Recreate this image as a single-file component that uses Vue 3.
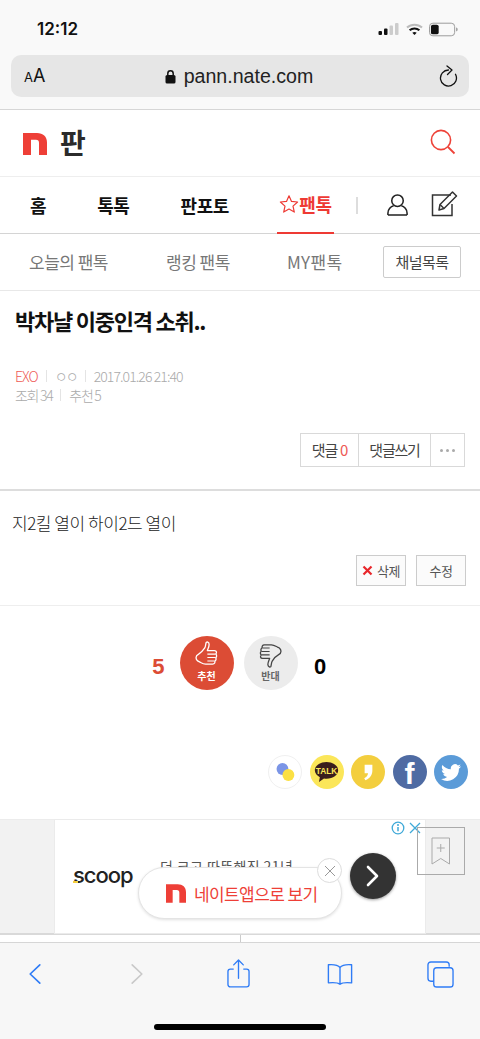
<script setup>
const mainTabs = ["홈", "톡톡", "판포토"];
const subTabs = ["오늘의 팬톡", "랭킹 팬톡", "MY팬톡"];
</script>

<template>
  <div class="page">
    <header class="safari-top">
      <div class="status">
        <span class="time">12:12</span>
        <div class="status-icons">
          <svg width="22" height="14" viewBox="0 0 22 14">
            <rect x="0.5" y="9" width="3.5" height="4" rx="1" fill="#111" />
            <rect x="6" y="6.5" width="3.5" height="6.5" rx="1" fill="#111" />
            <rect x="11.5" y="3.5" width="3.5" height="9.5" rx="1" fill="#ccc" />
            <rect x="17" y="1" width="3.5" height="12" rx="1" fill="#ccc" />
          </svg>
          <svg width="17" height="13" viewBox="0 0 17 13">
            <path d="M1 4.5C5.2.7 11.8.7 16 4.5" fill="none" stroke="#bbb" stroke-width="2" />
            <path d="M3.6 7.2c2.8-2.4 7-2.4 9.8 0" fill="none" stroke="#111" stroke-width="2" />
            <path d="M6.3 9.7c1.3-1 3.1-1 4.4 0L8.5 12z" fill="#111" />
          </svg>
          <svg width="30" height="15" viewBox="0 0 31 15">
            <rect x="0.5" y="1" width="26" height="13" rx="3.5" fill="none" stroke="#999" />
            <rect x="2" y="2.5" width="8" height="10" rx="2" fill="#111" />
            <path d="M28 5.5c1.2.4 1.6 1.1 1.6 2s-.4 1.6-1.6 2z" fill="#999" />
          </svg>
        </div>
      </div>
      <div class="url-bar">
        <span class="aa"><small>A</small>A</span>
        <div class="url">
          <svg width="11" height="15" viewBox="0 0 11 15">
            <path d="M2.8 7V4.4a2.7 2.7 0 0 1 5.4 0V7" fill="none" stroke="#111" stroke-width="1.5" />
            <rect x="0.5" y="6" width="10" height="8.5" rx="1.6" fill="#111" />
          </svg>
          <span>pann.nate.com</span>
        </div>
        <svg class="reload" width="20" height="22" viewBox="0 0 20 22">
          <path d="M9.5 5A8 8 0 1 0 16.5 9.2" fill="none" stroke="#111" stroke-width="1.3" stroke-linecap="round" />
          <path d="M8 1l5 4-4.5 4.5" fill="none" stroke="#111" stroke-width="1.3" stroke-linecap="round" stroke-linejoin="round" />
        </svg>
      </div>
    </header>

    <div class="logo-row">
      <div class="logo">
        <svg class="n-logo" width="24" height="22" viewBox="0 0 24 22">
          <path d="M0 0h14c6 0 10 3.5 10 9.5V22h-8V10c0-2-1-3.2-3-3.2H8V22H0z" fill="#ee3f37" />
        </svg>
        <span>판</span>
      </div>
      <svg class="search" width="26" height="26" viewBox="0 0 26 26">
        <circle cx="11" cy="11" r="9.6" fill="none" stroke="#ee4238" stroke-width="1.6" />
        <path d="M18 18l6.5 6.5" stroke="#ee4238" stroke-width="1.8" />
      </svg>
    </div>

    <nav class="main-nav">
      <a v-for="t in mainTabs" :key="t" class="main-tab">{{ t }}</a>
      <a class="main-tab active">
        <svg width="20" height="20" viewBox="0 0 20 20">
          <path d="M10 1.8l2.5 5.6 6.1.6-4.6 4.1 1.3 6-5.3-3.1-5.3 3.1 1.3-6L1.4 8l6.1-.6z" fill="none" stroke="#ee3a34" stroke-width="1.2" stroke-linejoin="round" />
        </svg>팬톡
      </a>
      <i class="nav-sep"></i>
      <svg class="user-ic" width="23" height="23" viewBox="0 0 24 24">
        <circle cx="12" cy="8" r="6" fill="none" stroke="#222" stroke-width="1.6" />
        <path d="M2 23v-2c0-4 3-7 6-7.6M22 23v-2c0-4-3-7-6-7.6M2 23h20" fill="none" stroke="#222" stroke-width="1.6" />
      </svg>
      <svg class="edit-ic" width="27" height="27" viewBox="0 0 27 27">
        <path d="M20 5H1.5v20.5H21V14" fill="none" stroke="#333" stroke-width="1.5" />
        <path d="M8 20l1-5.500L21.500 2l4 4L13 18.500z" fill="none" stroke="#333" stroke-width="1.5" stroke-linejoin="round" />
        <path d="M9 14.500l4 4" stroke="#333" stroke-width="1.5" />
      </svg>
    </nav>

    <nav class="sub-nav">
      <a v-for="t in subTabs" :key="t" class="sub-tab">{{ t }}</a>
      <a class="channel">채널목록</a>
    </nav>

    <section class="post-head">
      <h1>박차냘 이중인격 소취..</h1>
      <div class="meta">
        <span class="red">EXO</span><i></i><span class="nick">ㅇㅇ</span><i></i><span>2017.01.26 21:40</span>
      </div>
      <div class="meta second">
        <span>조회 34</span><i></i><span>추천 5</span>
      </div>
      <div class="reply-btns">
        <a class="w1">댓글 <b>0</b></a>
        <a class="w2">댓글쓰기</a>
        <a class="w3"><em></em><em></em><em></em></a>
      </div>
    </section>

    <section class="post-body">
      <p>지2킬 열이 하이2드 열이</p>
      <div class="edit-btns">
        <a>
          <svg width="11" height="11" viewBox="0 0 11 11">
            <path d="M1.5 1.5l8 8M9.5 1.5l-8 8" stroke="#e8262a" stroke-width="2.2" />
          </svg>
          삭제
        </a>
        <a>수정</a>
      </div>
    </section>

    <section class="vote">
      <b class="count up">5</b>
      <div class="circle red-c">
        <svg width="25" height="27" viewBox="0 0 28 31">
          <path d="M5 15c2-1 5-4 7-7 1-2 1-4 1.500-6 .5-1.500 3.500-1 3.500 2 0 3-1.500 5-2 7h8c3 0 3 3 1.500 4 1.500 1 1.500 3.500 0 4.200 1 1.300.5 3.300-1 3.800.5 1.500 0 3.500-2.500 3.500H13c-3 0-5-1.500-7-2.500-3-1-4-3-4-5s1-3 3-4z" fill="none" stroke="#fff" stroke-width="1.5" stroke-linejoin="round" />
          <path d="M15 15h9M15 19h9M15 23h8" stroke="#fff" stroke-width="1.3" />
        </svg>
        <span>추천</span>
      </div>
      <div class="circle grey-c">
        <svg width="25" height="27" viewBox="0 0 28 31">
          <path d="M23 16c-2 1-5 4-7 7-1 2-1 4-1.500 6-.5 1.500-3.500 1-3.500-2 0-3 1.500-5 2-7H5c-3 0-3-3-1.500-4C2 15 2 12.500 3.500 11.800c-1-1.300-.5-3.300 1-3.800C4 6.500 4.500 4.500 7 4.500h8c3 0 5 1.500 7 2.500 3 1 4 3 4 5s-1 3-3 4z" fill="none" stroke="#444" stroke-width="1.5" stroke-linejoin="round" />
          <path d="M13 16H4M13 12H4M13 8H5" stroke="#444" stroke-width="1.3" />
        </svg>
        <span>반대</span>
      </div>
      <b class="count">0</b>
    </section>

    <section class="share">
      <div class="sns talk-chat">
        <svg width="22" height="22" viewBox="0 0 26 26">
          <circle cx="10" cy="9.5" r="7" fill="#7b95e6" />
          <circle cx="17" cy="16.5" r="7" fill="#fbe043" />
        </svg>
      </div>
      <div class="sns kakao">
        <svg width="25" height="22" viewBox="0 0 30 26">
          <path d="M15 1C7 1 1 5.400 1 11c0 3.500 2.400 6.500 6 8.200L6 25l6-4.300c1 .2 2 .3 3 .3 8 0 14-4.400 14-10S23 1 15 1z" fill="#3a1d1d" />
          <text x="15" y="15" text-anchor="middle" class="talk">TALK</text>
        </svg>
      </div>
      <div class="sns story">
        <svg width="11" height="17" viewBox="0 0 14 22">
          <path d="M2 1h10v7.500C12 14 9 19 3 21l-1.500-2.500C4.500 17 6 15 6.500 12H2z" fill="#fff" />
        </svg>
      </div>
      <div class="sns fb"><span>f</span></div>
      <div class="sns tw">
        <svg width="20" height="17" viewBox="0 0 24 20">
          <path d="M24 2.400c-.9.400-1.800.700-2.800.800 1-.6 1.800-1.600 2.200-2.700-1 .6-2 1-3.100 1.200A4.900 4.900 0 0 0 11.900 6.200C7.800 6 4.200 4 1.700.900.400 3.200 1 6.100 3.200 7.500c-.8 0-1.600-.2-2.200-.6 0 2.300 1.600 4.400 3.900 4.900-.7.200-1.500.2-2.200.1.600 2 2.400 3.400 4.600 3.400A9.900 9.900 0 0 1 0 17.800 14 14 0 0 0 21.500 5.400c1-.7 1.800-1.600 2.500-3z" fill="#fff" />
        </svg>
      </div>
    </section>

    <section class="ad">
      <div class="ad-inner">
        <span class="scoop">scoop</span>
        <span class="ad-text">더 크고 따뜻해진 21년</span>
        <div class="go">
          <svg width="16" height="24" viewBox="0 0 16 24">
            <path d="M3 3l9 9-9 9" fill="none" stroke="#fff" stroke-width="2.6" stroke-linecap="round" stroke-linejoin="round" />
          </svg>
        </div>
        <svg class="ad-info" width="30" height="16" viewBox="0 0 30 16">
          <circle cx="7" cy="8" r="5.8" fill="none" stroke="#3fa9d8" stroke-width="1.3" />
          <path d="M7 7v4.200" stroke="#3fa9d8" stroke-width="1.5" />
          <circle cx="7" cy="4.9" r="1" fill="#3fa9d8" />
          <path d="M19 3l10 10M29 3L19 13" stroke="#3fa9d8" stroke-width="1.3" />
        </svg>
      </div>
      <div class="bookmark">
        <svg width="20" height="28" viewBox="0 0 20 28">
          <path d="M1 1h17.500v26L9.750 21.500 1 27z" fill="none" stroke="#aaa" />
          <path d="M9.750 7v8M5.750 11h8" stroke="#aaa" />
        </svg>
      </div>
      <div class="app-btn">
        <svg width="20" height="19" viewBox="0 0 24 22">
          <path d="M0 0h14c6 0 10 3.500 10 9.500V22h-8V10c0-2-1-3.200-3-3.200H8V22H0z" fill="#ee3f37" />
        </svg>
        <span>네이트앱으로 보기</span>
        <div class="app-close">
          <svg width="12" height="12" viewBox="0 0 12 12">
            <path d="M1 1l10 10M11 1L1 11" stroke="#999" stroke-width="1" />
          </svg>
        </div>
      </div>
    </section>

    <div class="ad-under"><i></i></div>

    <footer class="toolbar">
      <div class="tools">
        <svg class="t-back" width="14" height="22" viewBox="0 0 16 24">
          <path d="M13.500 1.500L2.500 12l11 10.500" fill="none" stroke="#2f7cf6" stroke-width="1.9" stroke-linecap="round" stroke-linejoin="round" />
        </svg>
        <svg class="t-fwd" width="14" height="22" viewBox="0 0 16 24">
          <path d="M2.500 1.500L13.500 12l-11 10.500" fill="none" stroke="#c9c9c9" stroke-width="1.9" stroke-linecap="round" stroke-linejoin="round" />
        </svg>
        <svg class="t-share" width="23" height="29" viewBox="0 0 24 30">
          <path d="M7 10.500H3.500a2.500 2.500 0 0 0-2.500 2.500v13.500A2.500 2.500 0 0 0 3.500 29h17a2.500 2.500 0 0 0 2.500-2.500V13a2.500 2.500 0 0 0-2.500-2.500H17" fill="none" stroke="#2f7cf6" stroke-width="1.4" />
          <path d="M12 20V1.500M7 6l5-5 5 5" fill="none" stroke="#2f7cf6" stroke-width="1.4" stroke-linecap="round" stroke-linejoin="round" />
        </svg>
        <svg class="t-book" width="26" height="23" viewBox="0 0 28 24">
          <path d="M14 4.500C12 2 8 1 1.500 1.500V21c5-.5 10-.5 12.500 1.500 2.500-2 7.500-2 12.500-1.500V1.500C20 1 16 2 14 4.500zV22" fill="none" stroke="#2f7cf6" stroke-width="1.5" stroke-linejoin="round" />
        </svg>
        <svg class="t-tabs" width="27" height="27" viewBox="0 0 28 28">
          <path d="M23 6V4a3 3 0 0 0-3-3H4a3 3 0 0 0-3 3v14a3 3 0 0 0 3 3h3" fill="none" stroke="#2f7cf6" stroke-width="1.4" />
          <rect x="7" y="7" width="20" height="20" rx="3" fill="none" stroke="#2f7cf6" stroke-width="1.4" />
        </svg>
      </div>
      <div class="home-bar"></div>
    </footer>
  </div>
</template>

<style scoped>
.page {
  width: 480px;
  height: 1039px;
  overflow: hidden;
  background: #fff;
  font-family: "Noto Sans CJK KR", "Liberation Sans", sans-serif;
  color: #111;
}
a {
  display: block;
}
.safari-top {
  height: 110px;
  box-sizing: border-box;
  background: #f9f9f9;
  border-bottom: 1px solid #d6d6d6;
}
.status {
  height: 55px;
  box-sizing: border-box;
  padding: 17px 21px 0 37px;
  display: flex;
  justify-content: space-between;
}
.time {
  font: 600 17px/24px Inter, "Liberation Sans", sans-serif;
  color: #111;
}
.status-icons {
  display: flex;
  align-items: center;
  gap: 6px;
  height: 24px;
}
.url-bar {
  margin: 0 11px;
  height: 42px;
  border-radius: 10px;
  background: #e6e6e6;
  display: flex;
  align-items: center;
  padding: 0 10px 0 13px;
}
.aa {
  width: 22px;
  font: 18px/22px Inter, "Liberation Sans", sans-serif;
  color: #111;
}
.aa small {
  font-size: 13px;
}
.url {
  flex: 1;
  display: flex;
  justify-content: center;
  align-items: center;
  gap: 8px;
  font: 19.6px/26px "Liberation Sans", sans-serif;
  color: #222;
  padding-right: 7px;
}
.reload {
  flex: none;
}
.logo-row {
  height: 67px;
  box-sizing: border-box;
  border-bottom: 1px solid #eee;
  padding: 0 24px 0 23px;
  display: flex;
  align-items: center;
  justify-content: space-between;
}
.logo {
  display: flex;
  align-items: center;
  gap: 13px;
  font-size: 28px;
  line-height: 36px;
  font-weight: 700;
  color: #2b2b2b;
}
.logo span {
  margin-top: -3px;
}
.n-logo {
  margin-top: 1px;
}
.search {
  margin-top: -3px;
}
.main-nav {
  height: 57px;
  box-sizing: border-box;
  border-bottom: 1px solid #d4d4d4;
  display: flex;
  align-items: center;
  padding-left: 30px;
}
.main-tab {
  font-size: 18px;
  line-height: 24px;
  font-weight: 700;
  letter-spacing: -0.4px;
  color: #111;
  margin-top: -1px;
  margin-right: 51px;
  display: flex;
  align-items: center;
}
.main-tab:nth-child(2) {
  margin-right: 51px;
}
.main-tab:nth-child(3) {
  margin-right: 48px;
}
.main-tab.active {
  color: #ee3a34;
  align-self: flex-start;
  height: 57px;
  width: 57px;
  box-sizing: border-box;
  margin: 0;
  padding-bottom: 1px;
  border-bottom: 2px solid #ee3a34;
  justify-content: center;
}
.nav-sep {
  width: 2px;
  height: 17px;
  background: #ddd;
  margin-left: 22px;
}
.user-ic {
  margin-left: 28px;
  margin-top: -2px;
}
.edit-ic {
  margin-left: 22px;
  margin-top: -4px;
}
.sub-nav {
  height: 57px;
  box-sizing: border-box;
  border-bottom: 1px solid #e8e8e8;
  display: flex;
  align-items: center;
  padding: 0 19px 0 29px;
}
.sub-tab {
  font-size: 17px;
  line-height: 24px;
  letter-spacing: -0.5px;
  color: #777;
  margin-right: 58px;
}
.sub-tab:nth-child(2) {
  margin-right: 57px;
}
.sub-tab:nth-child(3) {
  letter-spacing: 0.4px;
  margin-right: 0;
}
.channel {
  width: 78px;
  height: 32px;
  margin-left: auto;
  box-sizing: border-box;
  border: 1px solid #ccc;
  border-radius: 2px;
  text-align: center;
  font-size: 15px;
  line-height: 30px;
  letter-spacing: -0.6px;
  color: #444;
}
.post-head {
  height: 200px;
  box-sizing: border-box;
  border-bottom: 2px solid #ddd;
  padding: 13px 15px 0;
}
h1 {
  margin: 0;
  font-size: 22px;
  line-height: 32px;
  font-weight: 700;
  letter-spacing: -1.25px;
  color: #111;
}
.meta {
  margin-top: 31px;
  display: flex;
  align-items: center;
  height: 18px;
  font-size: 14px;
  font-weight: 300;
  letter-spacing: -0.9px;
  color: #aaa;
}
.meta.second {
  margin-top: 1px;
  letter-spacing: -1.3px;
}
.meta i {
  width: 1px;
  height: 12px;
  background: #e4e4e4;
  margin: 0 8px;
}
.meta .nick {
  letter-spacing: -2px;
}
.meta .red {
  color: #ee5a55;
}
.reply-btns {
  margin-top: 29px;
  display: flex;
  justify-content: flex-end;
  height: 34px;
}
.reply-btns a {
  box-sizing: border-box;
  height: 34px;
  border: 1px solid #d9d9d9;
  margin-left: -1px;
  font-size: 15px;
  line-height: 32px;
  letter-spacing: -0.9px;
  color: #444;
  text-align: center;
}
.reply-btns b {
  font-weight: 400;
  color: #ee5a55;
}
.w1 {
  width: 59px;
}
.reply-btns .w2 {
  width: 73px;
  letter-spacing: -1.2px;
}
.reply-btns .w3 {
  width: 35px;
  display: flex;
  align-items: center;
  justify-content: center;
  gap: 3px;
}
.w3 em {
  width: 3px;
  height: 3px;
  border-radius: 50%;
  background: #aaa;
}
.post-body {
  height: 115px;
  box-sizing: border-box;
  border-bottom: 1px solid #eee;
  padding: 20px 14px 0 12px;
}
.post-body p {
  margin: 0;
  font-size: 17px;
  line-height: 24px;
  font-weight: 300;
  letter-spacing: -0.45px;
  color: #222;
}
.edit-btns {
  margin-top: 20px;
  display: flex;
  justify-content: flex-end;
  gap: 10px;
}
.edit-btns a {
  width: 50px;
  height: 31px;
  box-sizing: border-box;
  border: 1px solid #ccc;
  background: #fbfbfb;
  display: flex;
  align-items: center;
  justify-content: center;
  gap: 4px;
  font-size: 13px;
  letter-spacing: -0.4px;
  color: #555;
}
.vote {
  height: 122px;
  padding-top: 30px;
  box-sizing: border-box;
  display: flex;
  justify-content: center;
  align-items: flex-start;
  gap: 10px;
}
.count {
  font: 700 22px/54px "Liberation Sans", sans-serif;
  width: 25px;
  margin-top: 4px;
  text-align: center;
  color: #000;
}
.count.up {
  color: #dc4c35;
  margin-left: -3px;
  text-align: right;
  padding-right: 5px;
  box-sizing: border-box;
}
.circle {
  width: 54px;
  height: 54px;
  border-radius: 50%;
  display: flex;
  flex-direction: column;
  align-items: center;
  font-size: 10px;
  line-height: 13px;
  font-weight: 700;
  padding-top: 5px;
  box-sizing: border-box;
}
.circle svg {
  margin-bottom: 1px;
}
.red-c {
  background: #dc4c35;
  color: #fff;
}
.grey-c {
  background: #ececec;
  color: #666;
}
.share {
  height: 91px;
  box-sizing: border-box;
  padding: 27px 12px 0 0;
  display: flex;
  justify-content: flex-end;
  gap: 7.5px;
}
.sns {
  width: 34px;
  height: 34px;
  border-radius: 50%;
  box-sizing: border-box;
  display: flex;
  align-items: center;
  justify-content: center;
}
.talk-chat {
  border: 1px solid #f0f0f0;
  background: #fff;
}
.kakao {
  background: #fbe659;
}
.talk {
  font: 700 10px "Liberation Sans", sans-serif;
  fill: #fbe659;
}
.story {
  background: #f3ce3e;
}
.fb {
  background: #4f6ba3;
  overflow: hidden;
}
.fb span {
  font: 700 30px/34px "Liberation Sans", sans-serif;
  color: #fff;
  margin-top: 3px;
}
.tw {
  background: #5b9bd8;
}
.ad {
  position: relative;
  height: 114px;
  box-sizing: border-box;
  background: #f2f2f2;
  border-top: 1px solid #ececec;
  padding: 0 55px;
}
.ad-inner {
  position: relative;
  height: 100%;
  background: #fff;
  box-shadow: 0 0 0 1px #ebebeb;
  overflow: hidden;
}
.scoop {
  position: absolute;
  left: 18px;
  top: 41px;
  font: 500 22px/28px Inter, "Liberation Sans", sans-serif;
  letter-spacing: -1px;
  color: #222;
}
.scoop::before {
  content: "";
  position: absolute;
  left: 0;
  bottom: 6px;
  width: 5px;
  height: 2px;
  background: #f3ce3e;
}
.ad-text {
  position: absolute;
  left: 105px;
  top: 34px;
  font-size: 14px;
  line-height: 24px;
  letter-spacing: 0.4px;
  color: #555;
}
.go {
  position: absolute;
  left: 295px;
  top: 33px;
  width: 46px;
  height: 46px;
  border-radius: 50%;
  background: #333;
  box-shadow: 0 1px 3px rgba(0, 0, 0, 0.4);
  display: flex;
  align-items: center;
  justify-content: center;
}
.ad-info {
  position: absolute;
  right: 4px;
  top: 0;
}
.bookmark {
  position: absolute;
  left: 417px;
  top: 7px;
  width: 48px;
  height: 48px;
  box-sizing: border-box;
  border: 1.5px solid #aaa;
  display: flex;
  align-items: center;
  justify-content: center;
}
.app-btn {
  position: absolute;
  left: 138px;
  top: 47px;
  width: 204px;
  height: 52px;
  box-sizing: border-box;
  border-radius: 26px;
  background: #fff;
  border: 1px solid #e4e4e4;
  box-shadow: 0 1px 3px rgba(0, 0, 0, 0.12);
  display: flex;
  align-items: center;
  gap: 8px;
  padding-left: 27px;
  font-size: 17px;
  letter-spacing: -0.6px;
  color: #ee3f37;
}
.app-close {
  position: absolute;
  right: -1px;
  top: -10px;
  width: 25px;
  height: 25px;
  box-sizing: border-box;
  border-radius: 50%;
  background: #fff;
  border: 1px solid #ddd;
  display: flex;
  align-items: center;
  justify-content: center;
}
.ad-under {
  height: 9px;
  box-sizing: border-box;
  border-top: 2px solid #d9d9d9;
  background: #fff;
  display: flex;
  justify-content: center;
}
.ad-under i {
  width: 1px;
  background: #ccc;
}
.toolbar {
  height: 97px;
  box-sizing: border-box;
  border-top: 1px solid #d6d6d6;
  background: #f7f7f7;
  position: relative;
}
.tools {
  height: 64px;
  display: flex;
  align-items: flex-start;
  padding-left: 28px;
}
.t-back {
  margin-top: 20px;
}
.t-fwd {
  margin: 20px 0 0 88px;
}
.t-share {
  margin: 16px 0 0 83px;
}
.t-book {
  margin: 20px 0 0 77px;
}
.t-tabs {
  margin: 18px 0 0 74px;
}
.home-bar {
  position: absolute;
  left: 154px;
  top: 81px;
  width: 172px;
  height: 6px;
  border-radius: 3px;
  background: #000;
}
</style>
